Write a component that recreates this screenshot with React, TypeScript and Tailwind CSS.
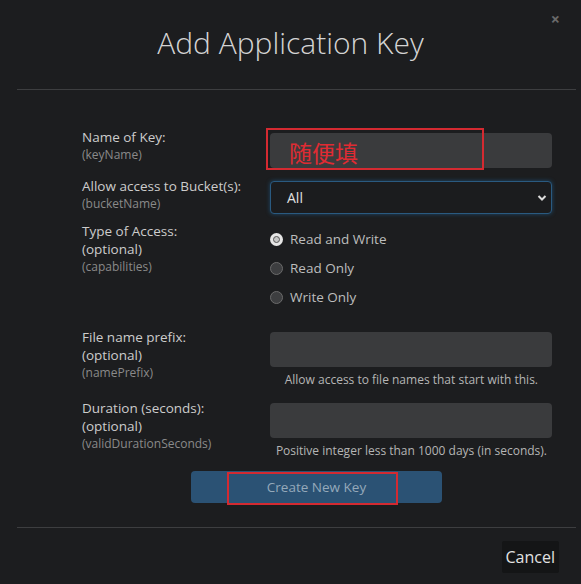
import React from "react";

const font = { fontFamily: '"Open Sans", "Noto Sans CJK SC", sans-serif' };

const Label: React.FC<{ lines: string[]; hint: string }> = ({ lines, hint }) => (
    <div className="w-[188px] shrink-0">
        {lines.map((l) => (
            <div key={l} className="text-[13.5px] leading-[18px] text-[#cccccc]">{l}</div>
        ))}
        <div className="text-[12px] leading-[17px] text-[#8a8a8a]">{hint}</div>
    </div>
);

const Radio: React.FC<{ label: string; checked?: boolean }> = ({ label, checked }) => (
    <label className="flex items-center gap-[7px] h-[29px]">
        <span
            className={
                checked
                    ? "w-[13px] h-[13px] rounded-full bg-[#e6e6e6] flex items-center justify-center"
                    : "w-[13px] h-[13px] rounded-full bg-[#3d3e40] border border-[#6b6b6b]"
            }
        >
            {checked && <span className="w-[7px] h-[7px] rounded-full bg-[#c8c8c8] border border-[#555]" />}
        </span>
        <span className="text-[13.5px] text-[#bdbdbd]">{label}</span>
    </label>
);

const App: React.FC = () => {
    return (
        <div className="w-[581px] h-[584px] bg-[#1c1d1f] relative overflow-hidden" style={font}>
            <div className="absolute right-[21px] top-[7px] text-[#6a6a6a] text-[16px] font-bold">×</div>
            <div className="h-[89px] flex items-center justify-center pb-[4px]">
                <h1 className="text-[30px] font-light text-[#d4d4d4]">Add Application Key</h1>
            </div>
            <div className="mx-[17px] w-[559px] h-px bg-[#3d3e40]" />

            <div className="pl-[82px] pr-[29px] pt-[43px]">
                {/* Name of Key */}
                <div className="flex">
                    <div className="mt-[-5px]"><Label lines={["Name of Key:"]} hint="(keyName)" /></div>
                    <div className="relative flex-1">
                        <div className="h-[35px] rounded-[4px] bg-[#3a3b3d]" />
                        <div className="absolute left-[-4px] top-[-5px] w-[218px] h-[42px] border-2 border-[#d42a31] flex items-center pl-[21px] pt-[6px]">
                            <span className="text-[23px] leading-none text-[#e02b33]" style={{ fontFamily: '"Noto Sans CJK SC", sans-serif' }}>随便填</span>
                        </div>
                    </div>
                </div>

                {/* Bucket */}
                <div className="flex mt-[13px]">
                    <div className="mt-[-4px]"><Label lines={["Allow access to Bucket(s):"]} hint="(bucketName)" /></div>
                    <div className="flex-1 h-[33px] rounded-[4px] bg-[#1b1c1e] border border-[#2a5a80] shadow-[0_0_4px_#1d4a6b] flex items-center justify-between pl-[16px] pr-[4px]">
                        <span className="text-[14px] text-[#e0e0e0]">All</span>
                        <svg width="10" height="8" viewBox="0 0 10 8">
                            <path d="M1.5 2 L5 5.5 L8.5 2" stroke="#dcdcdc" strokeWidth="2" fill="none" />
                        </svg>
                    </div>
                </div>

                {/* Type of Access */}
                <div className="flex mt-[8px]">
                    <Label lines={["Type of Access:", "(optional)"]} hint="(capabilities)" />
                    <div className="flex flex-col mt-[3px]">
                        <Radio label="Read and Write" checked />
                        <Radio label="Read Only" />
                        <Radio label="Write Only" />
                    </div>
                </div>

                {/* File name prefix */}
                <div className="flex mt-[16px]">
                    <Label lines={["File name prefix:", "(optional)"]} hint="(namePrefix)" />
                    <div className="flex-1 mt-[4px]">
                        <div className="h-[35px] rounded-[4px] bg-[#3a3b3d]" />
                        <div className="text-[12px] leading-[17px] text-[#b5b5b5] text-right pr-[14px] mt-[4px]">Allow access to file names that start with this.</div>
                    </div>
                </div>

                {/* Duration */}
                <div className="flex mt-[11px]">
                    <Label lines={["Duration (seconds):", "(optional)"]} hint="(validDurationSeconds)" />
                    <div className="flex-1 mt-[4px]">
                        <div className="h-[35px] rounded-[4px] bg-[#3a3b3d]" />
                        <div className="text-[12px] leading-[17px] text-[#b5b5b5] text-right pr-[5px] mt-[4px]">Positive integer less than 1000 days (in seconds).</div>
                    </div>
                </div>
            </div>

            <div className="flex mt-[12px] pl-[191px]">
                <div className="relative w-[251px] h-[32px] rounded-[4px] bg-[#2b5274] flex items-center justify-center">
                    <span className="text-[13.5px] text-[#95a9ba]">Create New Key</span>
                    <div className="absolute left-[36px] top-[1px] w-[171px] h-[33px] border-2 border-[#d42a31]" />
                </div>
            </div>

            <div className="mx-[17px] w-[559px] h-px bg-[#3d3e40] mt-[24px]" />
            <div className="flex justify-end pr-[22px] mt-[13px]">
                <button className="h-[32px] px-[4px] bg-[#141516] text-[16px] text-[#e2e2e2] rounded-[2px]">Cancel</button>
            </div>
        </div>
    );
};

export default App;
